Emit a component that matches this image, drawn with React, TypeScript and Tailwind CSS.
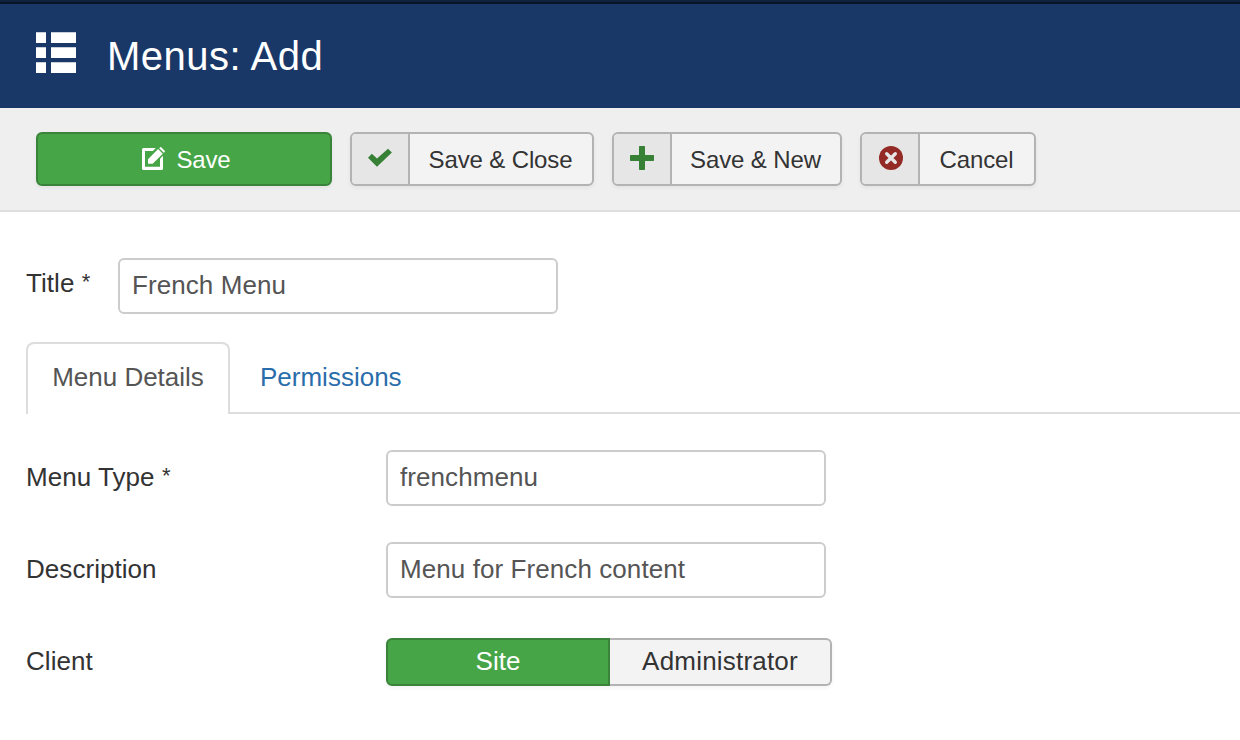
import type { ReactNode } from "react";

function ListIcon() {
  return (
    <svg className="block h-[42px] w-10 shrink-0" viewBox="0 0 40 42" fill="#fff">
      <path d="M0 .3h10v10.600H0zM15 .3h25v10.600H15zM0 15.300h10v10.600H0zM15 15.300h25v10.600H15zM0 30.300h10v10.600H0zM15 30.300h25v10.600H15z" />
    </svg>
  );
}

function EditIcon() {
  return (
    <svg className="block h-6 w-6 shrink-0" viewBox="0 0 24 24" fill="#fff">
      <path d="M1.500 1h12.300L10.900 4H3v15.700h15v-7.900l3-3v12.700q0 1.500-1.500 1.500h-18Q0 23 0 21.500v-19Q0 1 1.500 1z" />
      <path d="M6 16.800v-4.600L16.100 2l4.700 4.700L10.700 16.800zM17.200 1.200l.9-.9q.6-.5 1.100 0l3.500 3.500q.5.500 0 1.100l-.9.900z" />
    </svg>
  );
}

function CheckIcon() {
  return (
    <svg className="block h-6 w-6" viewBox="0 0 24 24" fill="#378137">
      <path d="M0 11.700l3.900-3.900 5.100 4.700L20 2.700l3.900 3.900L9 20.700z" />
    </svg>
  );
}

function PlusIcon() {
  return (
    <svg className="block h-6 w-6" viewBox="0 0 24 24" fill="#378137">
      <path d="M9.700 0h4.600q.7 0 .7.700V9h8.300q.7 0 .7.700v4.600q0 .7-.7.700H15v8.300q0 .7-.7.700H9.700q-.7 0-.7-.7V15H.7q-.7 0-.7-.7V9.700Q0 9 .7 9H9V.700q0-.7.7-.7z" />
    </svg>
  );
}

function CancelIcon() {
  return (
    <svg className="ml-px block h-6 w-6" viewBox="0 0 24 24">
      <circle cx="12" cy="12" r="12" fill="#942a25" />
      <path d="M7.700 7.700l8.600 8.600m0-8.600l-8.600 8.600" stroke="#e6e6e6" strokeWidth="3.400" strokeLinecap="round" />
    </svg>
  );
}

function ToolButton({ icon, children, className }: { icon: ReactNode; children: ReactNode; className: string }) {
  return (
    <button
      className={`flex h-[54px] overflow-hidden rounded-md border-2 border-[#b3b3b3] bg-[#f3f3f3] text-2xl text-[#333] shadow-[0_2px_4px_rgba(0,0,0,0.05)] ${className}`}
    >
      <span className="flex h-full w-[58px] shrink-0 justify-center border-r-2 border-[#b3b3b3] bg-[#e6e6e6] pt-[11.5px]">{icon}</span>
      <span className="flex-1 pr-px text-center leading-[52px] tracking-[-0.13px] whitespace-nowrap">{children}</span>
    </button>
  );
}

function TextField({ value }: { value: string }) {
  return (
    <input
      readOnly
      value={value}
      className="block h-14 w-[440px] rounded-md border-2 border-[#ccc] bg-white px-3 pb-0.5 text-[26px] tracking-[0.08px] text-[#555] outline-none"
    />
  );
}

function Required() {
  return <span className="align-[3px] text-[22px] leading-none">*</span>;
}

function Row({ label, children }: { label: ReactNode; children: ReactNode }) {
  return (
    <div className="flex h-[92px] items-start">
      <label className="w-[360px] leading-[54px] tracking-[0.05px]">{label}</label>
      {children}
    </div>
  );
}

export default function App() {
  return (
    <div className="h-[740px] w-[1240px] overflow-hidden bg-white font-['Liberation_Sans',Arial,sans-serif] text-[26px] text-[#333]">
      <header className="flex h-[108px] border-t-2 border-[#10223e] bg-[#1a3867]">
        <div className="flex w-full items-start border-t-2 border-[#07142a] pl-9 pt-7 text-white">
          <ListIcon />
          <h1 className="ml-[31px] text-[40px] leading-[48px] tracking-[0.5px]">Menus: Add</h1>
        </div>
      </header>

      <div className="flex h-[104px] gap-[18px] border-b-2 border-[#dedede] bg-[#efefef] pl-9 pt-6">
        <button className="flex h-[54px] w-[296px] items-center justify-center gap-[11px] rounded-md border-2 border-[#3a833a] bg-[#46a546] pl-1 text-2xl text-white shadow-[0_2px_4px_rgba(0,0,0,0.05)]">
          <EditIcon />
          <span className="pt-0.5 leading-[50px] tracking-[-0.2px]">Save</span>
        </button>
        <ToolButton icon={<CheckIcon />} className="w-[244px]">Save &amp; Close</ToolButton>
        <ToolButton icon={<PlusIcon />} className="w-[230px]">Save &amp; New</ToolButton>
        <ToolButton icon={<CancelIcon />} className="w-[176px]">Cancel</ToolButton>
      </div>

      <main className="pl-[26px] pt-[46px]">
        <div className="flex h-[84px]">
          <label className="w-[92px] leading-[50px] tracking-[0.05px]">Title <Required /></label>
          <TextField value="French Menu" />
        </div>

        <div className="flex h-[72px]">
          <div className="w-[204px] rounded-t-lg border-2 border-b-0 border-[#ddd] text-center leading-[66px] text-[#555]">Menu Details</div>
          <div className="flex-1 border-b-2 border-[#ddd] pl-[30px] leading-[70px] text-[#2a6dab]">Permissions</div>
        </div>

        <div className="pt-9">
          <Row label={<>Menu Type <Required /></>}><TextField value="frenchmenu" /></Row>
          <Row label="Description"><TextField value="Menu for French content" /></Row>
          <Row label="Client">
            <div className="mt-1 flex h-12 rounded-md text-center leading-[42px] shadow-[0_2px_4px_rgba(0,0,0,0.05)]">
              <button className="w-56 rounded-l-md border-2 border-[#3a833a] bg-[#46a546] pb-0.5 text-white">Site</button>
              <button className="w-[222px] rounded-r-md border-2 border-l-0 border-[#b3b3b3] bg-[#f3f3f3] pb-0.5 tracking-[0.2px]">Administrator</button>
            </div>
          </Row>
        </div>
      </main>
    </div>
  );
}
